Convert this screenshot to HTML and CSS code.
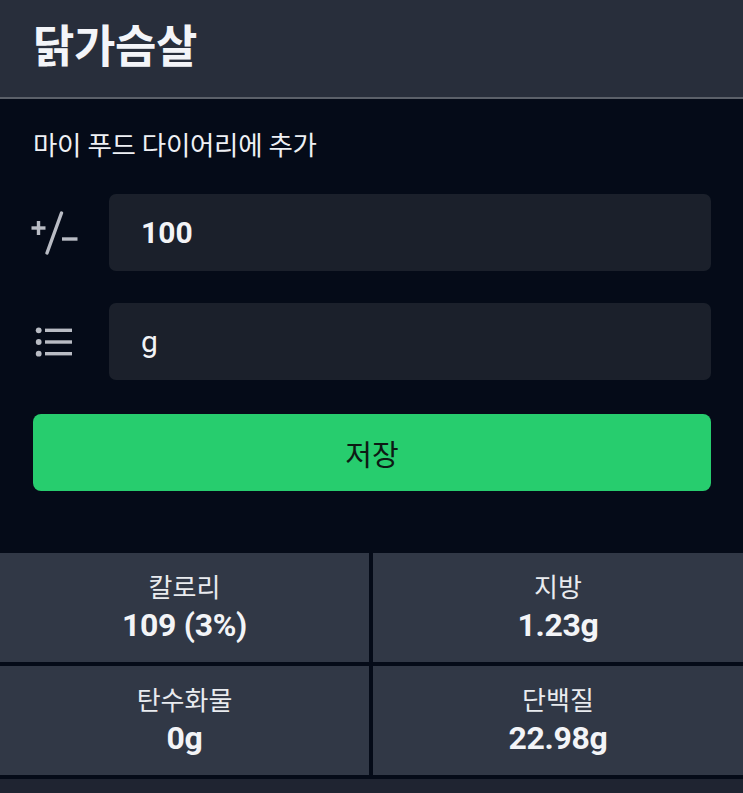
FILE: index.html
```html
<!DOCTYPE html>
<html lang="ko">
<head>
<meta charset="utf-8">
<link rel="stylesheet" href="styles.css">
</head>
<body>
<header class="topbar">
  <h1 class="title">닭가슴살</h1>
</header>
<main class="content">
  <p class="label">마이 푸드 다이어리에 추가</p>
  <div class="field-row">
    <div class="field-icon icon-pm">
      <svg width="50" height="44" viewBox="0 0 50 44">
        <g stroke="#b9bcc4" stroke-width="3.4" fill="none">
          <line x1="1.5" y1="17" x2="15.5" y2="17"/>
          <line x1="8.5" y1="10" x2="8.5" y2="24"/>
          <line x1="31.5" y1="2" x2="17" y2="42" stroke-linecap="round"/>
          <line x1="32" y1="28" x2="47.5" y2="28"/>
        </g>
      </svg>
    </div>
    <div class="field bold">100</div>
  </div>
  <div class="field-row">
    <div class="field-icon">
      <svg width="40" height="32" viewBox="0 0 40 32">
        <g fill="#b9bcc4">
          <circle cx="5.7" cy="4.3" r="2.9"/>
          <circle cx="5.7" cy="16" r="2.9"/>
          <circle cx="5.7" cy="27.7" r="2.9"/>
          <rect x="12" y="2.6" width="27" height="3.4"/>
          <rect x="12" y="14.3" width="27" height="3.4"/>
          <rect x="12" y="26" width="27" height="3.4"/>
        </g>
      </svg>
    </div>
    <div class="field">g</div>
  </div>
  <button class="save">저장</button>
</main>
<section class="grid">
  <div class="cell"><div class="cell-name">칼로리</div><div class="cell-value">109 (3%)</div></div>
  <div class="cell"><div class="cell-name">지방</div><div class="cell-value">1.23g</div></div>
  <div class="cell"><div class="cell-name">탄수화물</div><div class="cell-value">0g</div></div>
  <div class="cell"><div class="cell-name">단백질</div><div class="cell-value">22.98g</div></div>
</section>
<div class="bottom-strip"></div>
</body>
</html>
```
FILE: styles.css
```css
* { box-sizing: border-box; }
html, body {
  margin: 0;
  padding: 0;
  background: #050b18;
  font-family: Roboto, "Noto Sans CJK KR", sans-serif;
  color: #eceef2;
  overflow: hidden;
}
.topbar {
  height: 99px;
  background: #282e3b;
  border-bottom: 2px solid #5b6069;
  display: flex;
  align-items: center;
  padding-left: 33px;
}
.title {
  margin: 0;
  font-size: 45px;
  font-weight: 700;
  color: #f3f4f8;
  line-height: 1;
  letter-spacing: -0.4px;
  padding-bottom: 2px;
}
.content {
  padding: 0 32px 0 33px;
}
.label {
  margin: 31px 0 0;
  font-size: 26.5px;
  line-height: 32px;
  color: #eef0f4;
  letter-spacing: -0.3px;
}
.field-row {
  display: flex;
  align-items: center;
  margin-top: 32px;
}
.field-row + .field-row { margin-top: 32px; }
.field-icon {
  width: 76px;
  flex: none;
  display: flex;
  align-items: center;
}
.field-icon.icon-pm { margin-left: -3px; width: 79px; }
.field {
  flex: 1;
  height: 77px;
  background: #1b202b;
  border-radius: 7px;
  display: flex;
  align-items: center;
  padding-left: 32px;
  font-size: 30px;
  color: #f2f3f6;
}
.field.bold { font-weight: 700; }
.save {
  display: block;
  width: 100%;
  height: 77px;
  margin-top: 34px;
  border: 0;
  border-radius: 8px;
  background: #27cd6e;
  color: #0d1a14;
  font-family: Roboto, "Noto Sans CJK KR", sans-serif;
  font-size: 29px;
}
.grid {
  margin-top: 62px;
  display: grid;
  grid-template-columns: 369px 1fr;
  grid-auto-rows: 109px;
  gap: 4px;
}
.cell {
  background: #313846;
  display: flex;
  flex-direction: column;
  align-items: center;
  justify-content: center;
  padding-bottom: 2px;
}
.cell-name {
  font-size: 26px;
  line-height: 36px;
  color: #e9ebef;
}
.cell-value {
  font-size: 32px;
  line-height: 38px;
  font-weight: 700;
  color: #f3f4f7;
  letter-spacing: -0.3px;
}
.bottom-strip {
  margin-top: 4px;
  height: 40px;
  background: #1f2431;
}
```
